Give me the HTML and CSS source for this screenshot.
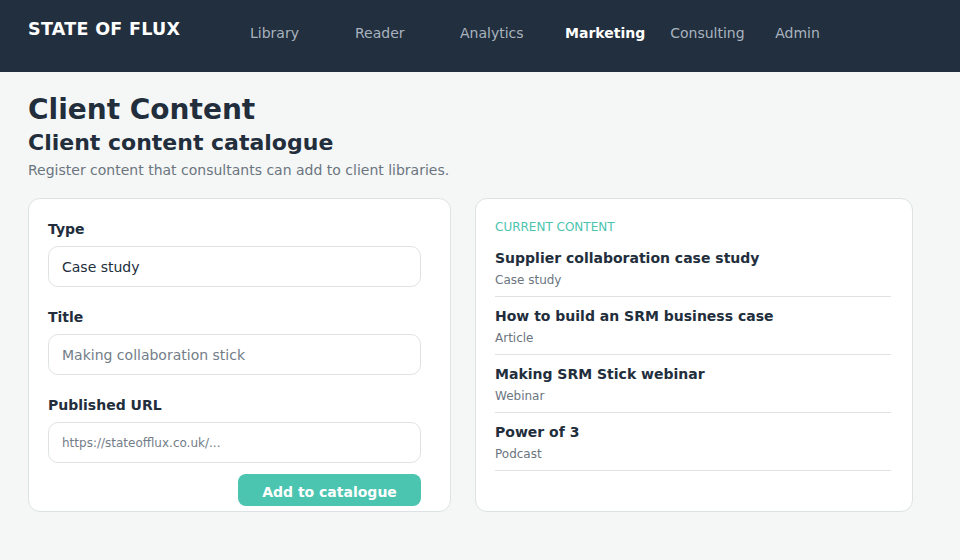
FILE: index.html
```html
<!DOCTYPE html>
<html lang="en">
<head>
    <meta charset="UTF-8">
    <meta name="viewport" content="width=device-width, initial-scale=1.0">
    <title>Client Content - State of Flux</title>
    <link rel="stylesheet" href="styles.css">
</head>
<body>
    <header class="topbar">
        <div class="brand">STATE OF FLUX</div>
        <nav class="nav">
            <a href="#">Library</a>
            <a href="#">Reader</a>
            <a href="#">Analytics</a>
            <a href="#" class="active">Marketing</a>
            <a href="#">Consulting</a>
            <a href="#">Admin</a>
        </nav>
    </header>

    <main class="page">
        <h1>Client Content</h1>
        <h2>Client content catalogue</h2>
        <p class="intro">Register content that consultants can add to client libraries.</p>

        <div class="panels">
            <form class="card form-card" onsubmit="return false;">
                <div class="field">
                    <label for="type">Type</label>
                    <input type="text" id="type" class="text-input" value="Case study">
                </div>
                <div class="field">
                    <label for="title">Title</label>
                    <input type="text" id="title" class="text-input" placeholder="Making collaboration stick">
                </div>
                <div class="field">
                    <label for="url">Published URL</label>
                    <input type="text" id="url" class="text-input small" placeholder="https://stateofflux.co.uk/...">
                </div>
                <div class="actions">
                    <button type="submit" class="add-btn">Add to catalogue</button>
                </div>
            </form>

            <section class="card list-card">
                <div class="eyebrow">Current content</div>
                <ul class="content-list">
                    <li>
                        <div class="item-title">Supplier collaboration case study</div>
                        <div class="item-type">Case study</div>
                    </li>
                    <li>
                        <div class="item-title">How to build an SRM business case</div>
                        <div class="item-type">Article</div>
                    </li>
                    <li>
                        <div class="item-title">Making SRM Stick webinar</div>
                        <div class="item-type">Webinar</div>
                    </li>
                    <li>
                        <div class="item-title">Power of 3</div>
                        <div class="item-type">Podcast</div>
                    </li>
                </ul>
            </section>
        </div>
    </main>
</body>
</html>
```

FILE: styles.css
```css
* {
    margin: 0;
    padding: 0;
    box-sizing: border-box;
}

body {
    font-family: 'DejaVu Sans', 'Liberation Sans', sans-serif;
    background: #f5f7f6;
    color: #222e3c;
}

.topbar {
    height: 72px;
    background: #222f3e;
    display: flex;
    align-items: flex-start;
    padding: 0 28px;
}

.brand {
    color: #fff;
    font-size: 17.5px;
    font-weight: bold;
    letter-spacing: 0.3px;
    line-height: 20px;
    margin-top: 19px;
    width: 222px;
}

.nav {
    display: flex;
    gap: 25px;
    margin-top: 23px;
}

.nav a {
    min-width: 80px;
    color: #a9b3bf;
    font-size: 14px;
    line-height: 20px;
    text-decoration: none;
}

.nav a.active {
    color: #fff;
    font-weight: bold;
}

.page {
    padding: 20px 28px;
}

h1 {
    font-size: 28px;
    line-height: 36px;
}

h2 {
    font-size: 22px;
    line-height: 28px;
    margin-top: 1px;
}

.intro {
    font-size: 14px;
    color: #6b7580;
    line-height: 20px;
    margin-top: 3px;
}

.panels {
    display: grid;
    grid-template-columns: 423px 438px;
    gap: 24px;
    margin-top: 18px;
}

.card {
    background: #fff;
    border: 1px solid #dde2e4;
    border-radius: 12px;
}

.form-card {
    padding: 20px 29px 5px 19px;
}

.field {
    margin-bottom: 20px;
}

.field label {
    display: block;
    font-size: 14px;
    font-weight: bold;
    line-height: 20px;
    margin-bottom: 7px;
}

.text-input {
    width: 100%;
    height: 41px;
    padding: 0 13px;
    border: 1px solid #dfe3e6;
    border-radius: 10px;
    font-family: inherit;
    font-size: 14px;
    color: #222e3c;
    background: #fff;
}

.text-input::placeholder {
    color: #737d88;
}

.text-input.small {
    font-size: 12px;
}

.text-input:focus {
    outline: none;
    border-color: #4cc4b0;
}

.actions {
    display: flex;
    justify-content: flex-end;
    margin-top: -9px;
}

.add-btn {
    width: 183px;
    height: 32px;
    padding-top: 3px;
    background: #4bc4b0;
    color: #fff;
    border: none;
    border-radius: 8px;
    font-family: inherit;
    font-size: 14px;
    font-weight: bold;
    cursor: pointer;
}

.list-card {
    padding: 20px 21px 20px 19px;
}

.eyebrow {
    color: #4bc4b0;
    font-size: 12px;
    line-height: 16px;
    text-transform: uppercase;
    margin-bottom: 4px;
}

.content-list {
    list-style: none;
}

.content-list li {
    padding: 9px 0 8px;
    border-bottom: 1px solid #dfe3e6;
}

.item-title {
    font-size: 14px;
    font-weight: bold;
    line-height: 20px;
}

.item-type {
    font-size: 12px;
    color: #6b7580;
    line-height: 16px;
    margin-top: 4px;
}
```
